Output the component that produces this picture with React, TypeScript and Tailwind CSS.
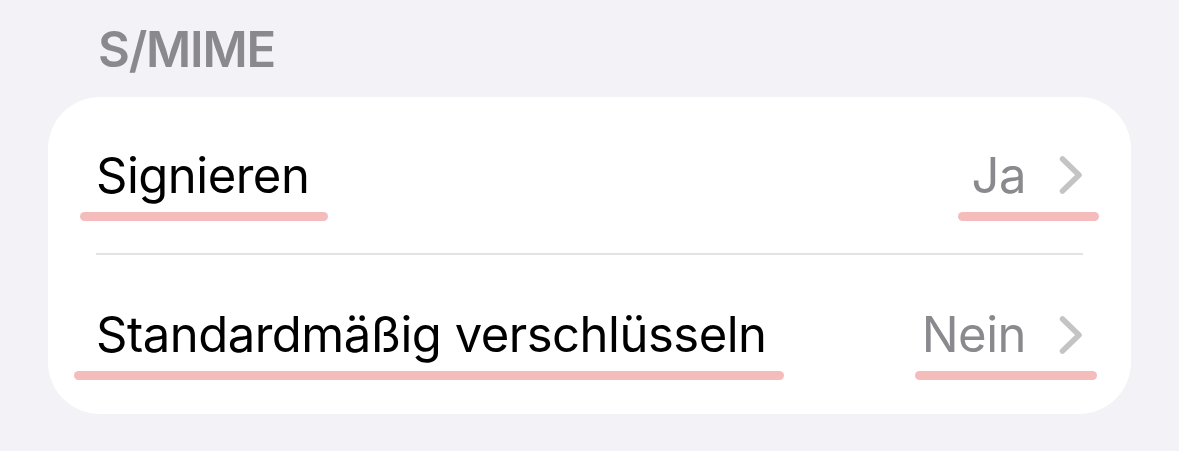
import { ReactNode } from "react";

interface RowProps {
  label: string;
  value: string;
  labelMark: [number, number];
  valueMark: [number, number];
}

function Chevron() {
  return (
    <svg width="24" height="38" viewBox="0 0 24 38" className="shrink-0">
      <path
        d="M3.5 3 L20 19 L3.5 35"
        fill="none"
        stroke="#c4c4c7"
        strokeWidth="5.5"
        strokeLinecap="round"
        strokeLinejoin="round"
      />
    </svg>
  );
}

// pink highlight drawn under a piece of text
function Mark({ children, left, right }: { children: ReactNode; left: number; right: number }) {
  return (
    <span className="relative inline-block">
      {children}
      <span
        className="absolute bottom-[-21px] h-[9px] rounded-full bg-[#f5bcbc] blur-[0.6px]"
        style={{ left: -left, right: -right }}
      />
    </span>
  );
}

function Row({ label, value, labelMark, valueMark }: RowProps) {
  return (
    <div className="flex h-full items-center justify-between">
      <Mark left={labelMark[0]} right={labelMark[1]}>
        <span className="text-black">{label}</span>
      </Mark>
      <Mark left={valueMark[0]} right={valueMark[1]}>
        <span className="flex items-center gap-[33px] text-[#8a8a8e]">
          {value}
          <Chevron />
        </span>
      </Mark>
    </div>
  );
}

export default function App() {
  return (
    <div
      className="h-[451px] w-[1179px] overflow-hidden bg-[#f2f2f7] px-[48px] pt-[10px] text-[49px] leading-none tracking-[-0.5px]"
      style={{ fontFamily: "Inter, 'Noto Sans', sans-serif" }}
    >
      <h2 className="flex h-[87px] items-center pb-[8px] pl-[50px] font-semibold tracking-[-1.2px] text-[#8a8a8e]">
        S/MIME
      </h2>
      <div className="flex h-[317px] flex-col rounded-[52px] bg-white px-[48px]">
        <div className="h-[156px]">
          <Row label="Signieren" value="Ja" labelMark={[16, 19]} valueMark={[14, 16]} />
        </div>
        <div className="h-[2px] bg-[#e3e3e6]" />
        <div className="flex-1">
          <Row
            label="Standardmäßig verschlüsseln"
            value="Nein"
            labelMark={[22, 17]}
            valueMark={[7, 14]}
          />
        </div>
      </div>
    </div>
  );
}
